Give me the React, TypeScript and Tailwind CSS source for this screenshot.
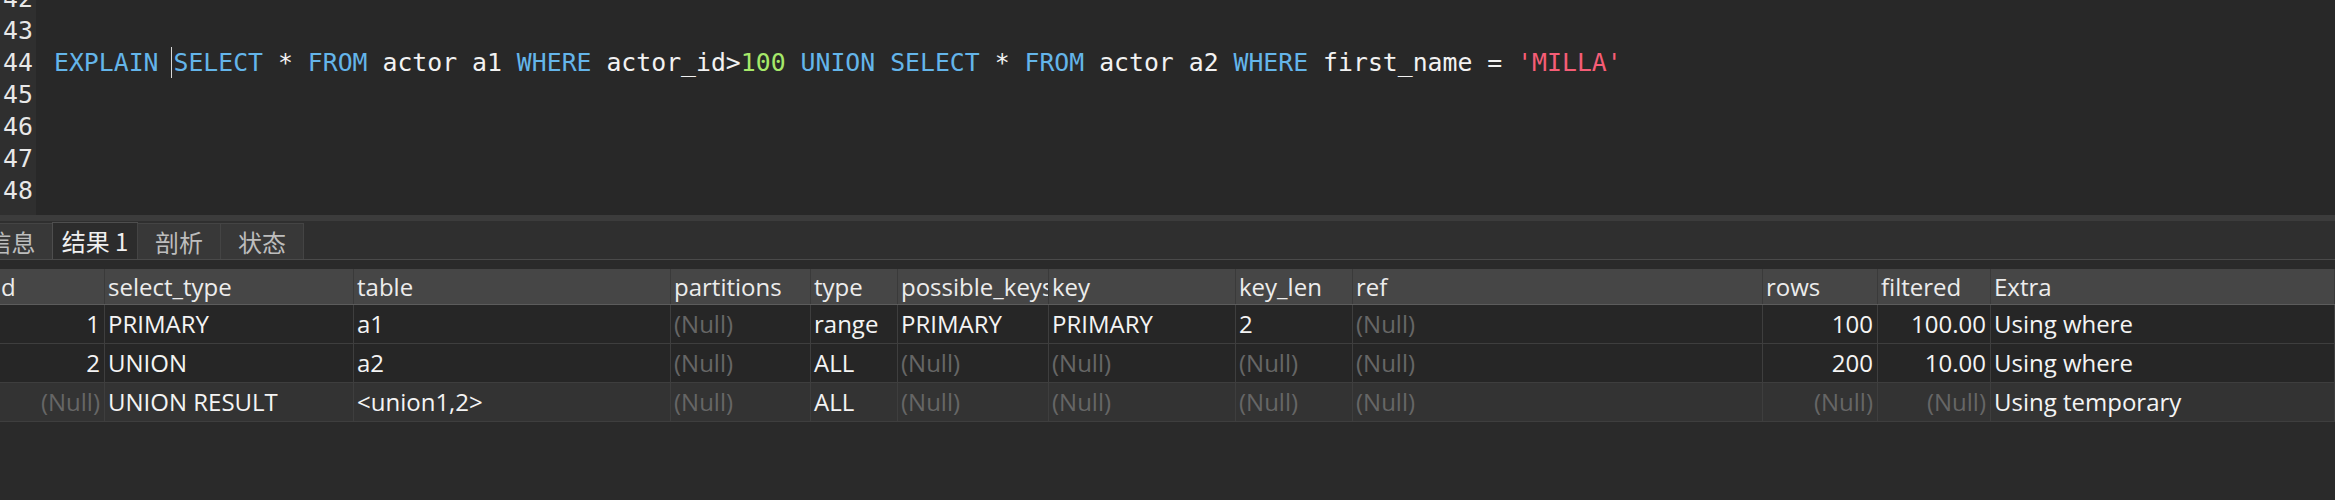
import React from "react";

const KW = "text-[#64b5ea]";
const ID = "text-[#f2f2f2]";

function Code() {
  return (
    <span className="whitespace-pre">
      <span className={KW}>EXPLAIN</span>
      <span className={ID}> </span>
      <span className="relative inline-block w-0 h-[32px] align-top">
        <span className="absolute left-[-2px] top-[0px] w-px h-[31px] bg-[#d8d8d8]" />
      </span>
      <span className={KW}>SELECT</span>
      <span className={ID}> * </span>
      <span className={KW}>FROM</span>
      <span className={ID}> actor a1 </span>
      <span className={KW}>WHERE</span>
      <span className={ID}> actor_id&gt;</span>
      <span className="text-[#a6e86a]">100</span>
      <span className={ID}> </span>
      <span className={KW}>UNION</span>
      <span className={ID}> </span>
      <span className={KW}>SELECT</span>
      <span className={ID}> * </span>
      <span className={KW}>FROM</span>
      <span className={ID}> actor a2 </span>
      <span className={KW}>WHERE</span>
      <span className={ID}> first_name = </span>
      <span className="text-[#f65d76]">'MILLA'</span>
    </span>
  );
}

const cols = [
  { name: "id", right: true },
  { name: "select_type" },
  { name: "table" },
  { name: "partitions" },
  { name: "type" },
  { name: "possible_keys" },
  { name: "key" },
  { name: "key_len" },
  { name: "ref" },
  { name: "rows", right: true },
  { name: "filtered", right: true },
  { name: "Extra" },
];

const N = null;
const rows: (string | null)[][] = [
  ["1", "PRIMARY", "a1", N, "range", "PRIMARY", "PRIMARY", "2", N, "100", "100.00", "Using where"],
  ["2", "UNION", "a2", N, "ALL", N, N, N, N, "200", "10.00", "Using where"],
  [N, "UNION RESULT", "<union1,2>", N, "ALL", N, N, N, N, N, N, "Using temporary"],
];

const GRID =
  "grid grid-cols-[113px_249px_317px_140px_87px_151px_187px_117px_410px_115px_113px_1fr]";

export default function App() {
  const lines = ["42", "43", "44", "45", "46", "47", "48"];
  return (
    <div
      className="w-[2335px] h-[500px] overflow-hidden bg-[#2a2a2a] flex flex-col"
      style={{ fontFamily: "'Open Sans', 'Noto Sans', 'Noto Sans CJK SC', sans-serif" }}
    >
      {/* Editor */}
      <div className="h-[215px] shrink-0 flex overflow-hidden bg-[#282828] font-['DejaVu_Sans_Mono',monospace] text-[24.8px]">
        <div className="w-[36px] shrink-0 bg-[#2f2f2f] pl-[3px] text-[#e8e8e8] flex flex-col mt-[-17px] leading-[32px]">
          {lines.map((l) => (
            <div key={l} className="h-[32px]">{l}</div>
          ))}
        </div>
        <div className="flex-1 pl-[18px] flex flex-col mt-[-17px] leading-[32px]">
          {lines.map((l) => (
            <div key={l} className="h-[32px] whitespace-pre">
              {l === "44" ? <Code /> : null}
            </div>
          ))}
        </div>
      </div>

      {/* separator */}
      <div className="h-[6px] shrink-0 bg-[#3c3c3c]" />

      {/* tab strip */}
      <div className="h-[39px] shrink-0 bg-[#2f2f2f] border-b border-[#4a4a4a] flex items-end text-[24px] font-['Noto_Sans_CJK_SC',sans-serif]">
        <div className="ml-[-30px] w-[83px] h-[36px] bg-[#383838] border border-b-0 border-[#444444] flex items-center justify-center text-[#bdbdbd]">
          信息
        </div>
        <div className="w-[86px] h-[37px] bg-[#2c2c2c] border border-b-0 border-[#4e4e4e] flex items-center justify-center text-[#f0f0f0] -ml-px">
          结果 1
        </div>
        <div className="w-[84px] h-[36px] bg-[#383838] border border-b-0 border-[#444444] flex items-center justify-center text-[#bdbdbd] -ml-px">
          剖析
        </div>
        <div className="w-[84px] h-[36px] bg-[#383838] border border-b-0 border-[#444444] flex items-center justify-center text-[#bdbdbd] -ml-px">
          状态
        </div>
      </div>

      {/* gap */}
      <div className="h-[9px] shrink-0" />

      {/* table */}
      <div className="ml-[-8px] text-[24px]">
        <div className={`${GRID} h-[36px] bg-[#464646] border-b border-[#5c5c5c]`}>
          {cols.map((c) => (
            <div
              key={c.name}
              className="border-r border-[#3a3a3a] pl-[3px] overflow-hidden whitespace-nowrap text-[#ececec] flex items-center leading-none"
            >
              {c.name}
            </div>
          ))}
        </div>
        {rows.map((r, i) => (
          <div
            key={i}
            className={`${GRID} h-[39px] border-b border-[#3e3e3e] ${i === 2 ? "bg-[#333333]" : "bg-[#262626]"}`}
          >
            {r.map((v, j) => (
              <div
                key={j}
                className={`border-r border-[#3e3e3e] overflow-hidden whitespace-nowrap flex items-center leading-none ${
                  cols[j].right ? "justify-end pr-[4px]" : "pl-[3px]"
                } ${v === null ? "text-[#666666]" : "text-[#f4f4f4]"}`}
              >
                {v === null ? "(Null)" : v}
              </div>
            ))}
          </div>
        ))}
      </div>
    </div>
  );
}
